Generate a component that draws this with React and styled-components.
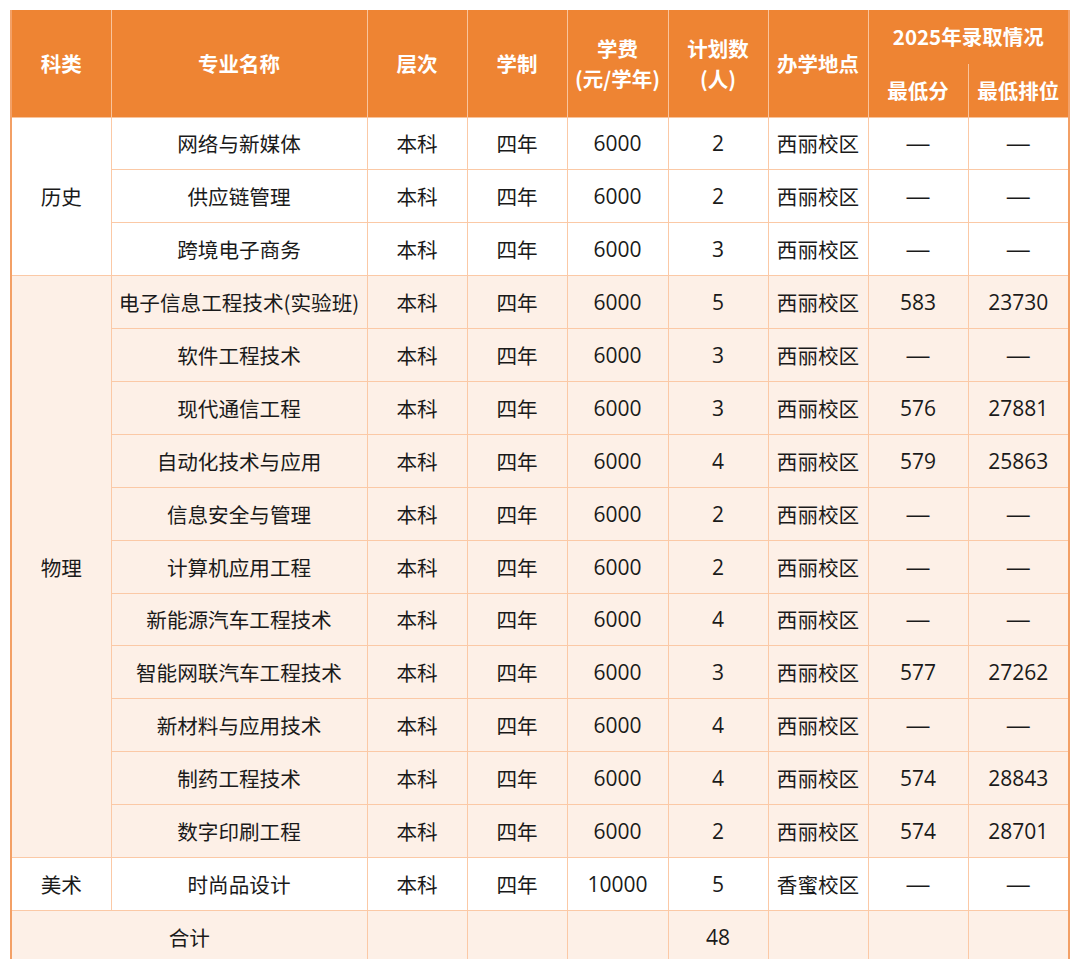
import React from "react";
import styled, { createGlobalStyle } from "styled-components";

const Global = createGlobalStyle`
  html, body { margin: 0; padding: 0; background: #ffffff; }
  body { font-family: "Noto Sans CJK SC", "Open Sans", sans-serif; }
`;

const Page = styled.div`
  padding: 10px 0 0 10px;
  width: 1080px;
  box-sizing: border-box;
`;

const Clip = styled.div`
  height: 949px;
  overflow: hidden;
  width: 1060px;
`;

const Table = styled.table`
  border-collapse: collapse;
  table-layout: fixed;
  width: 1060px;
  border-left: 2px solid #f3a066;
  border-right: 2px solid #f3a066;
`;

const HeadCell = styled.th`
  background: #ee8433;
  color: #ffffff;
  font-weight: 700;
  font-size: 20.5px;
  line-height: 30px;
  text-align: center;
  padding: 0;
  height: ${(p) => p.$h || 53}px;
  border-left: 1px solid #f9c49c;
  border-right: 1px solid #f9c49c;
  border-top: 0;
  border-bottom: 1px solid ${(p) => (p.$hideBottom ? "#ee8433" : "#f9c49c")};
  vertical-align: middle;
  box-sizing: border-box;
`;

const Row = styled.tr`
  background: ${(p) => (p.$tint ? "#fdf0e7" : "#ffffff")};
  height: 52.9px;
`;

const Cell = styled.td`
  border: 1px solid #fbc9a6;
  text-align: center;
  padding: 0;
  font-size: ${(p) => (p.$num ? "21px" : "20.6px")};
  font-family: ${(p) =>
    p.$num ? `"Open Sans", "Noto Sans CJK SC", sans-serif` : "inherit"};
  color: #1a1a1a;
  white-space: nowrap;
`;

const Dash = styled.span`
  font-family: "Liberation Sans", sans-serif;
  font-size: 23px;
  color: #1a1a1a;
`;

const physics = [
  ["电子信息工程技术(实验班)", "6000", "5", "西丽校区", "583", "23730"],
  ["软件工程技术", "6000", "3", "西丽校区", "—", "—"],
  ["现代通信工程", "6000", "3", "西丽校区", "576", "27881"],
  ["自动化技术与应用", "6000", "4", "西丽校区", "579", "25863"],
  ["信息安全与管理", "6000", "2", "西丽校区", "—", "—"],
  ["计算机应用工程", "6000", "2", "西丽校区", "—", "—"],
  ["新能源汽车工程技术", "6000", "4", "西丽校区", "—", "—"],
  ["智能网联汽车工程技术", "6000", "3", "西丽校区", "577", "27262"],
  ["新材料与应用技术", "6000", "4", "西丽校区", "—", "—"],
  ["制药工程技术", "6000", "4", "西丽校区", "574", "28843"],
  ["数字印刷工程", "6000", "2", "西丽校区", "574", "28701"],
];

const history = [
  ["网络与新媒体", "6000", "2", "西丽校区", "—", "—"],
  ["供应链管理", "6000", "2", "西丽校区", "—", "—"],
  ["跨境电子商务", "6000", "3", "西丽校区", "—", "—"],
];

const art = [["时尚品设计", "10000", "5", "香蜜校区", "—", "—"]];

const Val = ({ v }) => (v === "—" ? <Dash>—</Dash> : v);

function Group({ label, rows, tint }) {
  return rows.map((r, i) => (
    <Row key={r[0]} $tint={tint}>
      {i === 0 && <Cell rowSpan={rows.length}>{label}</Cell>}
      <Cell>{r[0]}</Cell>
      <Cell>本科</Cell>
      <Cell>四年</Cell>
      <Cell $num>{r[1]}</Cell>
      <Cell $num>{r[2]}</Cell>
      <Cell>{r[3]}</Cell>
      <Cell $num>
        <Val v={r[4]} />
      </Cell>
      <Cell $num>
        <Val v={r[5]} />
      </Cell>
    </Row>
  ));
}

export default function App() {
  const widths = [100, 256, 100, 100, 101, 100, 100, 100, 101];
  return (
    <Page>
      <Global />
      <Clip>
        <Table>
          <colgroup>
            {widths.map((w, i) => (
              <col key={i} style={{ width: w }} />
            ))}
          </colgroup>
          <thead>
            <tr>
              <HeadCell rowSpan={2}>科类</HeadCell>
              <HeadCell rowSpan={2}>专业名称</HeadCell>
              <HeadCell rowSpan={2}>层次</HeadCell>
              <HeadCell rowSpan={2}>学制</HeadCell>
              <HeadCell rowSpan={2}>
                学费
                <br />
                (元/学年)
              </HeadCell>
              <HeadCell rowSpan={2}>
                计划数
                <br />
                (人)
              </HeadCell>
              <HeadCell rowSpan={2}>办学地点</HeadCell>
              <HeadCell colSpan={2} $h={53} $hideBottom>
                2025年录取情况
              </HeadCell>
            </tr>
            <tr>
              <HeadCell $h={54}>最低分</HeadCell>
              <HeadCell $h={54}>最低排位</HeadCell>
            </tr>
          </thead>
          <tbody>
            <Group label="历史" rows={history} />
            <Group label="物理" rows={physics} tint />
            <Group label="美术" rows={art} />
            <Row $tint>
              <Cell colSpan={2}>合计</Cell>
              <Cell />
              <Cell />
              <Cell />
              <Cell $num>48</Cell>
              <Cell />
              <Cell />
              <Cell />
            </Row>
          </tbody>
        </Table>
      </Clip>
    </Page>
  );
}
